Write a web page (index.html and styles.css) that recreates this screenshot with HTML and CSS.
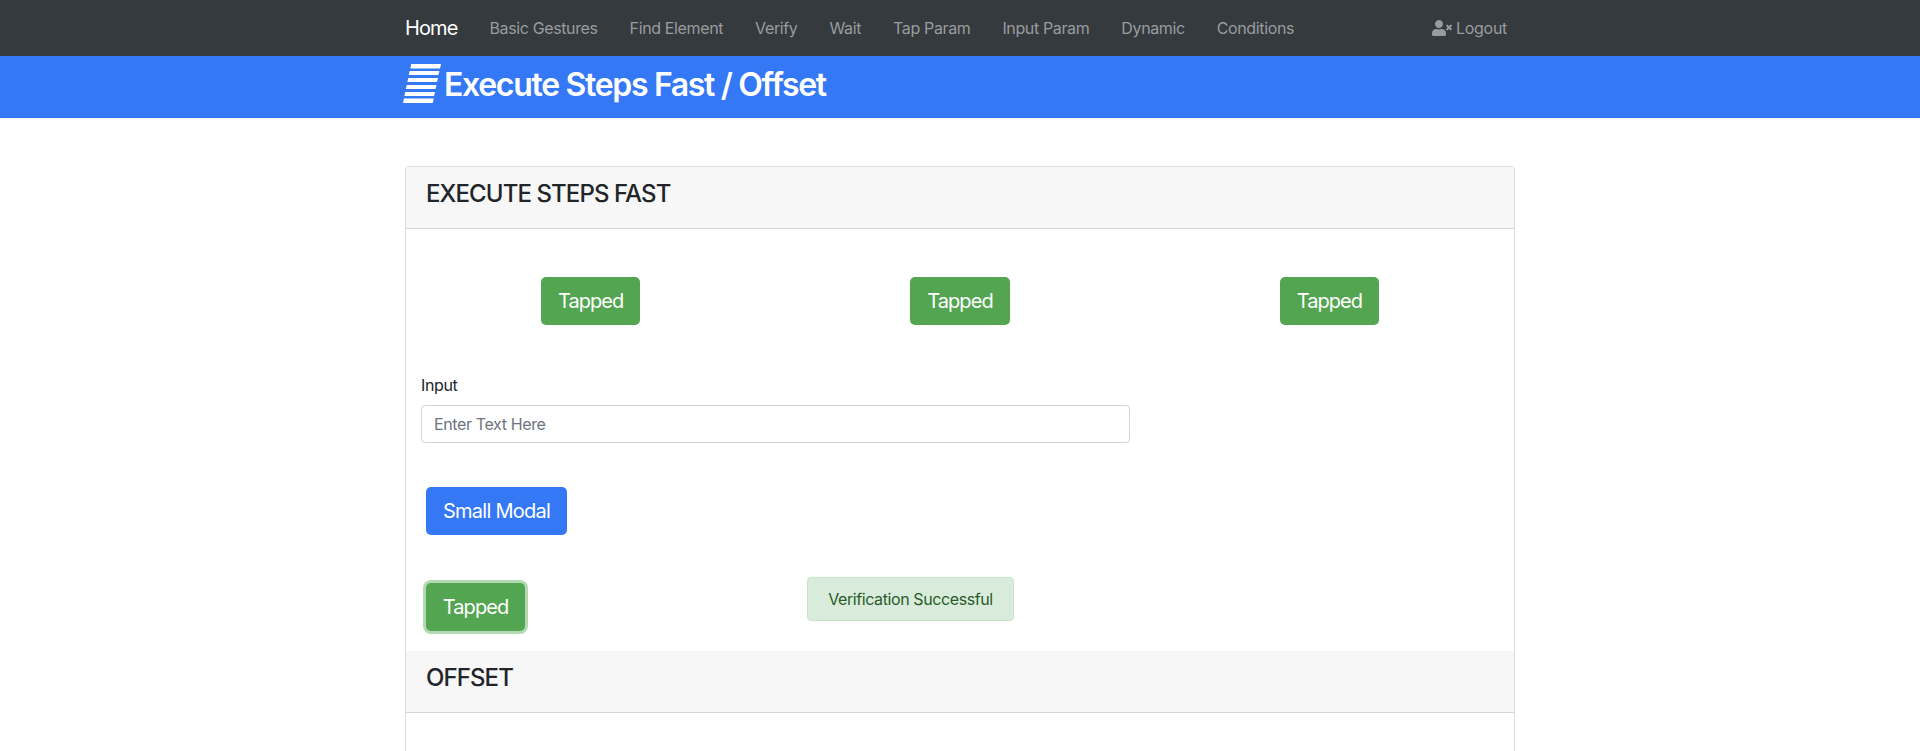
FILE: index.html
```html
<!DOCTYPE html>
<html lang="en">
<head>
<meta charset="utf-8">
<title>Execute Steps Fast / Offset</title>
<link rel="stylesheet" href="styles.css">
</head>
<body>
<nav class="navbar">
  <div class="container nav-row">
    <a class="brand">Home</a>
    <a class="nav-link">Basic Gestures</a>
    <a class="nav-link">Find Element</a>
    <a class="nav-link">Verify</a>
    <a class="nav-link">Wait</a>
    <a class="nav-link">Tap Param</a>
    <a class="nav-link">Input Param</a>
    <a class="nav-link">Dynamic</a>
    <a class="nav-link">Conditions</a>
    <a class="logout">
      <svg class="user-icon" viewBox="0 0 640 512" fill="currentColor"><path d="M589.6 240l45.6-45.6c6.3-6.3 6.3-16.5 0-22.8l-22.8-22.8c-6.3-6.3-16.5-6.3-22.8 0L544 194.400l-45.600-45.600c-6.300-6.300-16.500-6.300-22.800 0l-22.800 22.800c-6.300 6.300-6.300 16.500 0 22.800l45.600 45.600-45.600 45.600c-6.300 6.300-6.300 16.500 0 22.800l22.800 22.800c6.300 6.300 16.500 6.300 22.800 0l45.600-45.600 45.600 45.600c6.300 6.300 16.500 6.300 22.800 0l22.800-22.800c6.300-6.300 6.300-16.500 0-22.800L589.600 240zM224 256c70.700 0 128-57.300 128-128S294.700 0 224 0 96 57.300 96 128s57.300 128 128 128zm89.600 32h-16.700c-22.200 10.200-46.900 16-72.900 16s-50.600-5.800-72.900-16h-16.700C60.200 288 0 348.200 0 422.400V464c0 26.500 21.500 48 48 48h352c26.500 0 48-21.500 48-48v-41.600c0-74.200-60.200-134.400-134.400-134.400z"/></svg>
      <span>Logout</span>
    </a>
  </div>
</nav>
<header class="banner">
  <div class="container banner-row">
    <svg class="stripes" viewBox="0 0 38 39" fill="#fff"><path d="M8.200 0H38l-1 4.500H7.300zM6.600 7H36.400l-1 4H5.800zM5.200 14H35l-1 4H4.400zM3.700 21H33.500l-1 4H2.900zM2.200 28H32l-1 4H1.400zM.9 34.500H30.700l-.9 4.500H0z"/></svg>
    <h1 class="title">Execute Steps Fast / Offset</h1>
  </div>
</header>
<main class="container card">
  <h2 class="card-header">EXECUTE STEPS FAST</h2>
  <div class="tap-row">
    <button class="btn green">Tapped</button>
    <button class="btn green wide">Tapped</button>
    <button class="btn green">Tapped</button>
  </div>
  <div class="form-group">
    <label class="label" for="text">Input</label>
    <input class="input" id="text" placeholder="Enter Text Here">
  </div>
  <div class="modal-row"><button class="btn blue">Small Modal</button></div>
  <div class="verify-row">
    <button class="btn green focused">Tapped</button>
    <div class="alert">Verification Successful</div>
  </div>
  <h2 class="card-header">OFFSET</h2>
</main>
</body>
</html>
```
FILE: styles.css
```css
* { box-sizing: border-box; }
body { margin: 0; height: 751px; overflow: hidden; display: flex; flex-direction: column; background: #fff; color: #212529; font: 16px/24px Inter, "Liberation Sans", sans-serif; letter-spacing: -0.37px; }
.container { width: 1110px; margin: 0 auto; }
.navbar { height: 56px; background: #343a3e; flex: none; }
.nav-row { height: 100%; display: flex; align-items: center; gap: 32px; color: #999c9e; }
.brand { color: #fff; font-size: 20px; letter-spacing: -0.9px; }
.logout { margin-left: auto; padding-right: 8px; display: flex; align-items: center; gap: 4px; letter-spacing: -0.3px; }
.user-icon { width: 20px; height: 16px; }
.banner { height: 62px; background: #3478f6; flex: none; }
.banner-row { display: flex; align-items: flex-start; gap: 3px; padding-top: 8px; }
.stripes { width: 38px; height: 39px; margin-left: -2px; }
.title { margin: 2px 0 0; color: #fff; font-size: 32px; line-height: 38px; font-weight: 600; letter-spacing: -1.32px; }
.card { flex: 1; margin-top: 48px; border: 1px solid #dfdfdf; border-bottom: 0; border-radius: 4px 4px 0 0; }
.card-header { margin: 0; height: 62px; padding: 12px 20px; font-size: 24px; line-height: 29px; font-weight: 500; letter-spacing: -0.9px; background: #f7f7f7; border-bottom: 1px solid #d8d8d8; }
.tap-row { display: grid; grid-template-columns: repeat(3, 1fr); justify-items: center; padding: 48px 0; }
.btn { height: 48px; width: 99px; border: 0; border-radius: 5px; padding: 0; color: #fff; font: 20px/30px Inter, "Liberation Sans", sans-serif; letter-spacing: -0.95px; }
.wide { width: 100px; }
.green { background: #53a551; }
.blue { background: #3478f6; width: 141px; letter-spacing: -0.75px; }
.focused { box-shadow: 0 0 0 3px #b3d8b4; }
.form-group { display: flex; flex-direction: column; gap: 8px; margin-left: 15px; width: 709px; }
.label { line-height: 24px; }
.input { height: 38px; border: 1px solid #ced4da; border-radius: 4px; padding: 6px 12px; font: inherit; letter-spacing: inherit; }
.input::placeholder { color: #6c757d; opacity: 1; }
.modal-row { padding: 44px 20px 0; }
.verify-row { display: flex; align-items: flex-start; height: 116px; padding: 42px 20px 0; }
.verify-row .btn { margin-top: 6px; }
.alert { margin-left: 282px; width: 207px; height: 44px; padding: 9px 0; text-align: center; letter-spacing: -0.4px; background: #d9ebdb; border: 1px solid #c8e4ca; border-radius: 4px; color: #285b2a; }
```
